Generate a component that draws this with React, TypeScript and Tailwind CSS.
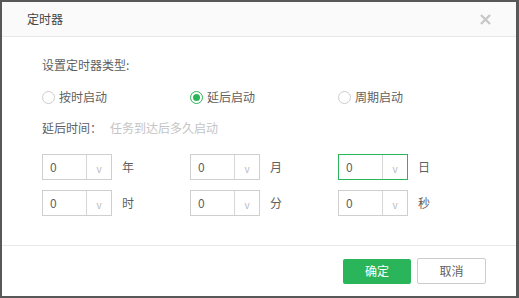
const font = { fontFamily: '"Noto Sans CJK SC", "Noto Sans", sans-serif' }

function Radio({ label, checked }: { label: string; checked?: boolean }) {
  return (
    <div className="flex items-center gap-[4px] w-[148px]">
      <span
        className={`w-[13px] h-[13px] rounded-full border flex items-center justify-center ${
          checked ? 'border-[#2bb55a]' : 'border-[#cdcdcd]'
        }`}
      >
        {checked && <span className="w-[7px] h-[7px] rounded-full bg-[#2bb55a]" />}
      </span>
      <span className="text-[12px] text-[#5f5f5f]">{label}</span>
    </div>
  )
}

function NumSelect({ unit, active }: { unit: string; active?: boolean }) {
  return (
    <div className="flex items-center w-[148px]">
      <div
        className={`flex w-[70px] h-[26px] border ${active ? 'border-[#2bb55a]' : 'border-[#cfcfcf]'}`}
      >
        <div className="w-[43px] flex items-center pl-[7px] text-[12px] text-[#5f5f5f]">0</div>
        <div className="flex-1 border-l border-[#d6d6d6] flex items-center justify-center pt-[3px] text-[10px] text-[#bbb]">
          v
        </div>
      </div>
      <span className="ml-[10px] text-[12px] text-[#5f5f5f]">{unit}</span>
    </div>
  )
}

export default function App() {
  return (
    <div
      style={font}
      className="w-[519px] h-[298px] bg-white border-t-2 border-l-2 border-b-2 border-r-[3px] border-[#585858] flex flex-col"
    >
      <div className="h-[35px] shrink-0 bg-[#fafafa] border-b border-[#e8e8e8] flex items-center justify-between pl-[25px] pr-[25px]">
        <span className="text-[12px] text-[#444]">定时器</span>
        <svg width="11" height="11" viewBox="0 0 11 11">
          <path d="M1 1L10 10M10 1L1 10" stroke="#c8c8c8" strokeWidth="2.4" />
        </svg>
      </div>
      <div className="flex-1 pl-[40px] pt-[18px]">
        <div className="h-[20px] leading-[20px] text-[12px] text-[#5f5f5f]">设置定时器类型:</div>
        <div className="flex h-[20px] mt-[12px]">
          <Radio label="按时启动" />
          <Radio label="延后启动" checked />
          <Radio label="周期启动" />
        </div>
        <div className="h-[20px] leading-[20px] mt-[11px] text-[12px] flex">
          <span className="text-[#5f5f5f] w-[68px]">延后时间：</span>
          <span className="text-[#c4c4c4]">任务到达后多久启动</span>
        </div>
        <div className="flex mt-[16px]">
          <NumSelect unit="年" />
          <NumSelect unit="月" />
          <NumSelect unit="日" active />
        </div>
        <div className="flex mt-[10px]">
          <NumSelect unit="时" />
          <NumSelect unit="分" />
          <NumSelect unit="秒" />
        </div>
      </div>
      <div className="h-[51px] shrink-0 border-t border-[#e8e8e8] flex items-center justify-end gap-[6px] pr-[30px]">
        <button className="w-[68px] h-[25px] bg-[#2bb55a] text-white text-[12px] rounded-[2px]">确定</button>
        <button className="w-[69px] h-[26px] bg-white border border-[#ccc] text-[#5f5f5f] text-[12px] rounded-[2px]">
          取消
        </button>
      </div>
    </div>
  )
}
